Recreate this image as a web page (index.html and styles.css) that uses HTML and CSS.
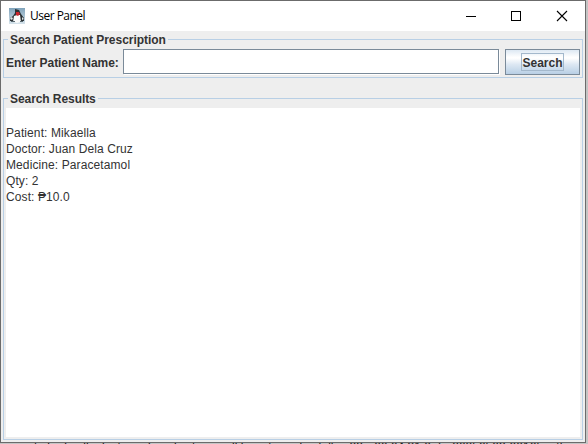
FILE: index.html
```html
<!DOCTYPE html>
<html lang="en">
<head>
<meta charset="utf-8">
<title>User Panel</title>
<link rel="stylesheet" href="styles.css">
</head>
<body>
<div class="window">
  <header class="titlebar">
    <svg class="app-icon" width="16" height="16" viewBox="0 0 16 16">
      <defs><linearGradient id="sky" x2="0" y2="1"><stop stop-color="#7fa3bb"/><stop offset="1" stop-color="#d5e2ea"/></linearGradient></defs>
      <path fill="url(#sky)" d="M0 0h16v16H0z"/>
      <path fill="#2b3135" d="M6 1l4 1 2 4 3 4v3H1v-3l3-2 2-3z"/>
      <path fill="#fbfbfb" d="M5 8l3-1 3 0 1 7-4 1-4-1z"/>
      <path fill="#c9252d" d="M7 4h3l1 2-2 2-2-1z"/>
      <path fill="#dfe7ea" d="M1 10l2-1 1 2-2 1zM13 9l2 2-2 1z"/>
      <path fill="#596970" d="M2 13h4v1H2zM11 13h3v1h-3z"/>
    </svg>
    <h1 class="title">User Panel</h1>
    <svg class="controls" width="104" height="12" viewBox="0 0 104 12" shape-rendering="crispEdges" fill="none" stroke="#000">
      <path d="M0 6.500h10M45.500 1.500h9v9h-9z"/>
      <path shape-rendering="auto" stroke-width="1.100" d="M91 1l10 10M101 1L91 11"/>
    </svg>
  </header>
  <main class="content">
    <section class="group search">
      <h2 class="legend">Search Patient Prescription</h2>
      <div class="row">
        <label class="label" for="patient">Enter Patient Name:</label>
        <input class="field" id="patient" type="text">
        <button class="button"><span class="focus">Search</span></button>
      </div>
    </section>
    <section class="group results">
      <h2 class="legend">Search Results</h2>
      <div class="output">
        <p>Patient: Mikaella</p>
        <p>Doctor: Juan Dela Cruz</p>
        <p>Medicine: Paracetamol</p>
        <p>Qty: 2</p>
        <p>Cost: ₱10.0</p>
      </div>
    </section>
  </main>
</div>
<div class="console"><span>to be finally destroyed applications will be returned in full in 23,</span><span>06.64.31.0.7,</span><span>20250503-0016) in this</span></div>
</body>
</html>
```
FILE: styles.css
```css
* { box-sizing: border-box; }
body { margin: 0; width: 588px; height: 444px; overflow: hidden; position: relative; background: #c4c4c4; font: 12px "Liberation Sans", Arial, sans-serif; color: #333; }
h1, h2, p { margin: 0; }
.window { position: relative; z-index: 1; width: 586px; height: 443px; border: 1px solid #6b6b6b; background: #eee; display: flex; flex-direction: column; }
.titlebar { height: 30px; background: #fff; display: flex; align-items: center; padding-left: 8px; }
.title { margin-left: 5px; font: 12px/18px "Open Sans", "Noto Sans", sans-serif; letter-spacing: -0.52px; color: #000; }
.controls { margin-left: auto; margin-right: 15px; }
.content { flex: 1; display: flex; flex-direction: column; padding: 8px 2px 2px; }
.group { border: 1px solid #b8cfe5; }
.search { height: 39px; }
.results { margin-top: 20px; height: 342px; padding: 0 2px 2px; display: flex; flex-direction: column; }
.legend { width: max-content; height: 14px; margin: -8px 0 0 4px; padding: 0 2px; background: #eee; font-size: 12px; line-height: 16px; font-weight: bold; letter-spacing: -0.03px; }
.results .legend { margin-left: 2px; letter-spacing: -0.07px; }
.row { display: flex; height: 26px; margin-top: 3px; padding: 0 2px; align-items: flex-start; }
.label { width: 117px; line-height: 28px; font-weight: bold; white-space: nowrap; letter-spacing: -0.07px; }
.field { width: 376px; height: 25px; border: 1px solid #7a8a99; outline: 0; padding: 0 3px; background: #fff; box-shadow: 1px 1px #fff; }
.button { margin-left: 6px; width: 75px; height: 26px; padding: 0; border: 1px solid #7a8a99; background: linear-gradient(#dde8f3 0, #fff 30%, #fff 34%, #dde8f3 60%, #b8cfe5 100%); font: bold 12px "Liberation Sans", Arial, sans-serif; color: #333; display: flex; align-items: center; justify-content: center; }
.focus { width: 43px; height: 18px; line-height: 18px; border: 1px solid #a3b8cc; text-align: center; }
.output { flex: 1; margin-top: 3px; padding-top: 17px; background: #fff; line-height: 16px; letter-spacing: 0.1px; }
.console { position: absolute; left: 34px; top: 440px; width: 541px; display: flex; justify-content: space-between; white-space: nowrap; font: 12px/14px "Liberation Sans", sans-serif; color: #111; }
```
